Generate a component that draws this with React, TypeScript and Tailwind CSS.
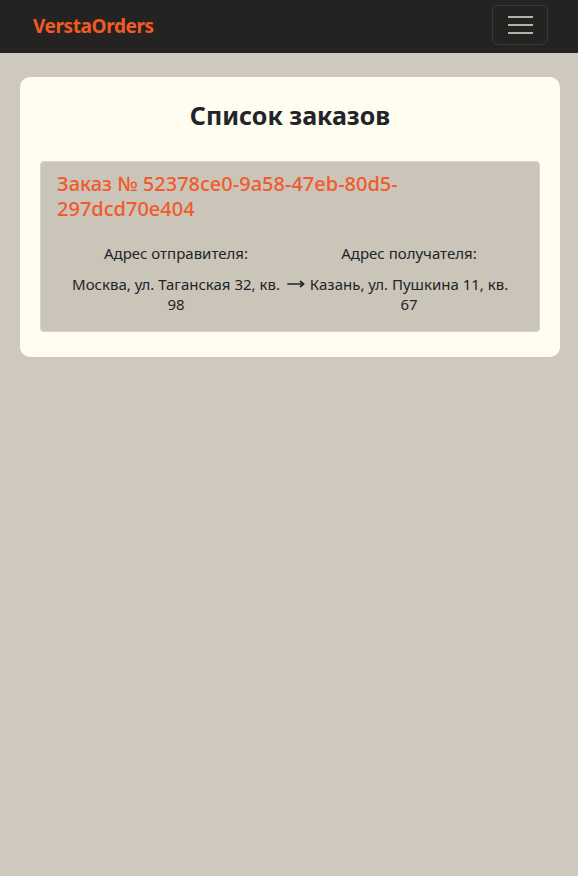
const font = { fontFamily: '"Noto Sans", "Open Sans", sans-serif' };

function Arrow() {
  return (
    <svg width="18" height="10" viewBox="0 0 18 10" fill="none" stroke="#212529" strokeWidth="1.7" strokeLinecap="round" strokeLinejoin="round">
      <path d="M1 5h15.5" />
      <path d="M13.5 2.5 16.5 5l-3 2.5" />
    </svg>
  );
}

export default function App() {
  return (
    <div className="min-h-[876px] bg-[#cfc8bc] text-[#212529]" style={font}>
      <nav className="h-[53px] bg-[#242322] flex items-start justify-between pl-[33px] pr-[30px]">
        <span className="mt-[13px] text-[19px] leading-[26px] font-bold text-[#f15a24] tracking-[-0.4px]">VerstaOrders</span>
        <button className="mt-[5px] w-[56px] h-[40px] rounded-md border border-white/10 flex flex-col items-center justify-center gap-[6px]">
          <span className="block w-[25px] h-[2px] bg-[#b3b1ae]" />
          <span className="block w-[25px] h-[2px] bg-[#b3b1ae]" />
          <span className="block w-[25px] h-[2px] bg-[#b3b1ae]" />
        </button>
      </nav>

      <main className="pl-[20px] pr-[18px] pt-[24px]">
        <div className="bg-[#fffcf0] rounded-[10px] px-[20px] pt-[22px] pb-[25px]">
          <h1 className="text-center text-[25px] font-bold leading-[32px] text-[#212529] mb-[30px]">
            Список заказов
          </h1>

          <div className="bg-[#cac4b9] border border-[#d9d4cb] rounded-[4px] px-[16px] pt-[9px] pb-[17px]">
            <h2 className="text-[20px] leading-[25px] text-[#f15a2b] font-medium">
              Заказ № 52378ce0-9a58-47eb-80d5-297dcd70e404
            </h2>

            <div className="mt-[22px] ml-[8px] grid grid-cols-[222px_20px_204px] text-[15px] leading-[20px] text-center">
              <div>Адрес отправителя:</div>
              <div />
              <div>Адрес получателя:</div>

              <div className="mt-[11px]">Москва, ул. Таганская 32, кв. 98</div>
              <div className="mt-[11px] h-[20px] flex items-center justify-start">
                <Arrow />
              </div>
              <div className="mt-[11px]">Казань, ул. Пушкина 11, кв. 67</div>
            </div>
          </div>
        </div>
      </main>
    </div>
  );
}
